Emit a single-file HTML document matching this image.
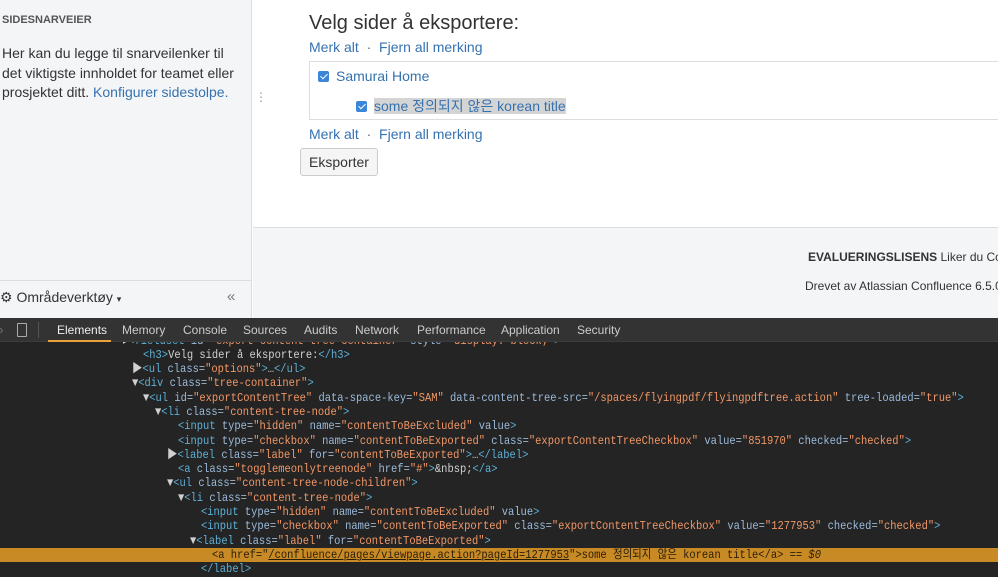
<!DOCTYPE html>
<html><head><meta charset="utf-8"><style>
*{margin:0;padding:0;box-sizing:border-box}
body{width:998px;height:577px;overflow:hidden;background:#fff;font-family:"Liberation Sans","Noto Sans CJK KR",sans-serif;position:relative}
.a{position:absolute;white-space:nowrap}
.lk{color:#3572b0;text-decoration:none}
.code{font-family:"Liberation Mono","Noto Sans CJK KR",monospace;font-size:12px;color:#a0b4c8;white-space:pre;position:absolute;height:14.3px;line-height:14.3px;transform:scaleX(0.87);transform-origin:0 0}
.t{color:#5db0d7}.n{color:#9bbbdc}.v{color:#f29766}.w{color:#d0d0d0}
.cb{display:inline-block;width:11px;height:11px;background:#3b86d8;border-radius:2px;vertical-align:-1px;margin-right:7px;position:relative}
.cb:after{content:"";position:absolute;left:3.5px;top:1px;width:3px;height:6px;border:solid #fff;border-width:0 1.5px 1.5px 0;transform:rotate(45deg)}
</style></head><body>
<div class="a" style="left:0;top:0;width:252px;height:318px;background:#f4f5f7;border-right:1px solid #ddd"></div>
<div class="a" style="left:2px;top:14px;font-size:11px;font-weight:bold;color:#555">SIDESNARVEIER</div>
<div class="a" style="left:2px;top:44px;font-size:14px;line-height:19.5px;color:#333;width:245px;white-space:normal">Her kan du legge til snarveilenker til det viktigste innholdet for teamet eller prosjektet ditt. <span class="lk">Konfigurer sidestolpe.</span></div>
<div class="a" style="left:0;top:280px;width:252px;border-top:1px solid #ddd"></div>
<div class="a" style="left:0;top:289px;font-size:14px;color:#333">⚙ Områdeverktøy <span style="font-size:9px">▾</span></div>
<div class="a" style="left:227px;top:288px;font-size:15px;color:#777">«</div>
<div class="a" style="left:255px;top:90px;font-size:12px;color:#999">⋮</div>
<div class="a" style="left:253px;top:227px;width:745px;height:91px;background:#f4f5f7;border-top:1px solid #ddd"></div>
<div class="a" style="left:309px;top:12px;font-size:20px;color:#333">Velg sider å eksportere:</div>
<div class="a" style="left:309px;top:39px;font-size:14px"><span class="lk">Merk alt</span> <span style="color:#666">&nbsp;·&nbsp;</span> <span class="lk">Fjern all merking</span></div>
<div class="a" style="left:309px;top:61px;width:700px;height:59px;border:1px solid #ddd"></div>
<div class="a" style="left:318px;top:68px;font-size:14px"><span class="cb"></span><span class="lk">Samurai Home</span></div>
<div class="a" style="left:356px;top:96px;font-size:14px"><span class="cb"></span><span class="lk" style="background:#d4d4d4">some 정의되지 않은 korean title</span></div>
<div class="a" style="left:309px;top:126px;font-size:14px"><span class="lk">Merk alt</span> <span style="color:#666">&nbsp;·&nbsp;</span> <span class="lk">Fjern all merking</span></div>
<div class="a" style="left:300px;top:148px;width:78px;height:28px;border:1px solid #ccc;border-radius:3px;background:#f5f5f5;font-size:14px;color:#333;text-align:center;line-height:26px">Eksporter</div>
<div class="a" style="left:808px;top:250px;font-size:12px;color:#333"><b>EVALUERINGSLISENS</b> Liker du Con</div>
<div class="a" style="left:805px;top:279px;font-size:12px;color:#333">Drevet av Atlassian Confluence 6.5.0</div>
<div class="a" style="left:0;top:318px;width:998px;height:259px;background:#242424"></div>
<div class="a" style="left:0;top:548px;width:998px;height:14px;background:#c88a25"></div>
<div class="code" style="top:334px;left:123px"><span class="w">▸</span><span class="t">&lt;fieldset</span> <span class="n">id</span>=<span class="v">"export-content-tree-container"</span> <span class="n">style</span>=<span class="v">"display: block;"</span><span class="t">&gt;</span></div>
<div class="a" style="left:0;top:318px;width:998px;height:24px;background:#333;border-bottom:1px solid #3c3c3c;font-size:12px;color:#ccc;line-height:24px">
<span class="a" style="left:-3px;color:#aaa">⌕</span><span class="a" style="left:17px;top:5px;width:10px;height:14px;border:1px solid #aaa;border-radius:1px"></span>
<span class="a" style="left:38px;top:4px;height:16px;border-left:1px solid #555"></span>
<span class="a" style="left:57px;color:#eee">Elements</span><span class="a" style="left:48px;top:22px;width:63px;height:2px;background:#e8a33d"></span>
<span class="a" style="left:122px">Memory</span><span class="a" style="left:183px">Console</span><span class="a" style="left:243px">Sources</span><span class="a" style="left:304px">Audits</span><span class="a" style="left:355px">Network</span><span class="a" style="left:417px">Performance</span><span class="a" style="left:501px">Application</span><span class="a" style="left:577px">Security</span></div>
<div class="code" style="top:348px;left:143px"><span class="t">&lt;h3&gt;</span><span class="w">Velg sider å eksportere:</span><span class="t">&lt;/h3&gt;</span></div>
<div class="code" style="top:362px;left:132px"><span class="w">▶</span><span class="t">&lt;ul</span> <span class="n">class</span>=<span class="v">"options"</span><span class="t">&gt;</span><span class="w">…</span><span class="t">&lt;/ul&gt;</span></div>
<div class="code" style="top:376px;left:132px"><span class="w">▼</span><span class="t">&lt;div</span> <span class="n">class</span>=<span class="v">"tree-container"</span><span class="t">&gt;</span></div>
<div class="code" style="top:391px;left:143px"><span class="w">▼</span><span class="t">&lt;ul</span> <span class="n">id</span>=<span class="v">"exportContentTree"</span> <span class="n">data-space-key</span>=<span class="v">"SAM"</span> <span class="n">data-content-tree-src</span>=<span class="v">"/spaces/flyingpdf/flyingpdftree.action"</span> <span class="n">tree-loaded</span>=<span class="v">"true"</span><span class="t">&gt;</span></div>
<div class="code" style="top:405px;left:155px"><span class="w">▼</span><span class="t">&lt;li</span> <span class="n">class</span>=<span class="v">"content-tree-node"</span><span class="t">&gt;</span></div>
<div class="code" style="top:419px;left:178px"><span class="t">&lt;input</span> <span class="n">type</span>=<span class="v">"hidden"</span> <span class="n">name</span>=<span class="v">"contentToBeExcluded"</span> <span class="n">value</span><span class="t">&gt;</span></div>
<div class="code" style="top:434px;left:178px"><span class="t">&lt;input</span> <span class="n">type</span>=<span class="v">"checkbox"</span> <span class="n">name</span>=<span class="v">"contentToBeExported"</span> <span class="n">class</span>=<span class="v">"exportContentTreeCheckbox"</span> <span class="n">value</span>=<span class="v">"851970"</span> <span class="n">checked</span>=<span class="v">"checked"</span><span class="t">&gt;</span></div>
<div class="code" style="top:448px;left:167px"><span class="w">▶</span><span class="t">&lt;label</span> <span class="n">class</span>=<span class="v">"label"</span> <span class="n">for</span>=<span class="v">"contentToBeExported"</span><span class="t">&gt;</span><span class="w">…</span><span class="t">&lt;/label&gt;</span></div>
<div class="code" style="top:462px;left:178px"><span class="t">&lt;a</span> <span class="n">class</span>=<span class="v">"togglemeonlytreenode"</span> <span class="n">href</span>=<span class="v">"#"</span><span class="t">&gt;</span><span class="w">&amp;nbsp;</span><span class="t">&lt;/a&gt;</span></div>
<div class="code" style="top:476px;left:167px"><span class="w">▼</span><span class="t">&lt;ul</span> <span class="n">class</span>=<span class="v">"content-tree-node-children"</span><span class="t">&gt;</span></div>
<div class="code" style="top:491px;left:178px"><span class="w">▼</span><span class="t">&lt;li</span> <span class="n">class</span>=<span class="v">"content-tree-node"</span><span class="t">&gt;</span></div>
<div class="code" style="top:505px;left:201px"><span class="t">&lt;input</span> <span class="n">type</span>=<span class="v">"hidden"</span> <span class="n">name</span>=<span class="v">"contentToBeExcluded"</span> <span class="n">value</span><span class="t">&gt;</span></div>
<div class="code" style="top:519px;left:201px"><span class="t">&lt;input</span> <span class="n">type</span>=<span class="v">"checkbox"</span> <span class="n">name</span>=<span class="v">"contentToBeExported"</span> <span class="n">class</span>=<span class="v">"exportContentTreeCheckbox"</span> <span class="n">value</span>=<span class="v">"1277953"</span> <span class="n">checked</span>=<span class="v">"checked"</span><span class="t">&gt;</span></div>
<div class="code" style="top:534px;left:190px"><span class="w">▼</span><span class="t">&lt;label</span> <span class="n">class</span>=<span class="v">"label"</span> <span class="n">for</span>=<span class="v">"contentToBeExported"</span><span class="t">&gt;</span></div>
<div class="code" style="top:548px;left:212px;color:#2a1e08">&lt;a href="<u>/confluence/pages/viewpage.action?pageId=1277953</u>"&gt;some 정의되지 않은 korean title&lt;/a&gt; == <i>$0</i></div>
<div class="code" style="top:562px;left:201px"><span class="t">&lt;/label&gt;</span></div>
</body></html>
